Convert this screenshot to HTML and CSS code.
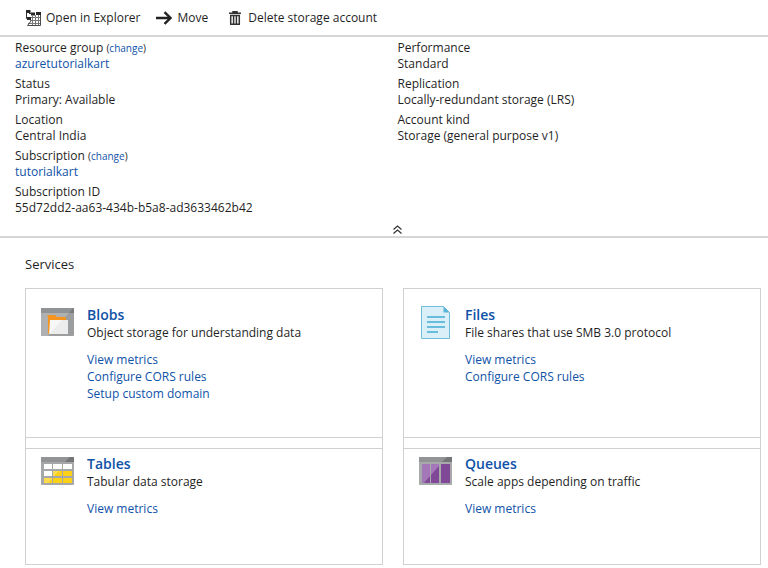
FILE: index.html
```html
<!DOCTYPE html>
<html lang="en">
<head>
<meta charset="utf-8">
<title>Storage account</title>
<meta name="viewport" content="width=device-width, initial-scale=1">
<link rel="stylesheet" href="styles.css">
</head>
<body>
<header class="toolbar">
  <button type="button" class="command">
    <svg width="16" height="16" viewBox="0 0 16 16" aria-hidden="true">
      <path fill="none" stroke="#777" d="M6 7.500h10M5 10.500h11M3 13.500h13M7.500 6v9M10.500 5v10M13.500 4v11"/>
      <path fill="none" stroke="#4a4a4a" d="M15.500 3v12.500H2.500L6 11"/>
      <path fill="#262626" d="M1 0h4.500v3H1zM6 2.500h4v3H6zM11 2h5v3h-5zM2 7h4v3H2z"/>
      <path fill="none" stroke="#333" d="M1.500 2v6.500H3M4 3.500h3"/>
    </svg>
    <span>Open in Explorer</span>
  </button>
  <button type="button" class="command">
    <svg width="16" height="14" viewBox="0 0 16 14" aria-hidden="true">
      <path fill="none" stroke="#222" stroke-width="2.400" d="M0 7h14.500M8.500 1.200 14.500 7l-6 5.800"/>
    </svg>
    <span>Move</span>
  </button>
  <button type="button" class="command command-delete">
    <svg width="12" height="14" viewBox="0 0 12 14" aria-hidden="true">
      <path fill="none" stroke="#333" stroke-width="1.500" d="M0 2.300h12M4 2V.7h4V2M1.700 4v9.200h8.600V4M1 4.500h10M4.600 5v8M7.400 5v8"/>
    </svg>
    <span>Delete storage account</span>
  </button>
</header>

<main>
  <section class="essentials" aria-label="Essentials">
    <div class="essentials-columns">
      <dl class="properties">
        <div class="property"><dt>Resource group <small>(<a href="#">change</a>)</small></dt><dd><a href="#">azuretutorialkart</a></dd></div>
        <div class="property"><dt>Status</dt><dd>Primary: Available</dd></div>
        <div class="property"><dt>Location</dt><dd>Central India</dd></div>
        <div class="property"><dt>Subscription <small>(<a href="#">change</a>)</small></dt><dd><a href="#">tutorialkart</a></dd></div>
        <div class="property"><dt>Subscription ID</dt><dd>55d72dd2-aa63-434b-b5a8-ad3633462b42</dd></div>
      </dl>
      <dl class="properties">
        <div class="property"><dt>Performance</dt><dd>Standard</dd></div>
        <div class="property"><dt>Replication</dt><dd>Locally-redundant storage (LRS)</dd></div>
        <div class="property"><dt>Account kind</dt><dd>Storage (general purpose v1)</dd></div>
      </dl>
    </div>
    <button type="button" class="collapse" aria-label="Collapse essentials">
      <svg width="9" height="9" viewBox="0 0 9 9" aria-hidden="true">
        <path fill="none" stroke="#333" stroke-width="1.200" d="M.5 4.500l4-3.500 4 3.500M.5 8.500l4-3.500 4 3.500"/>
      </svg>
    </button>
  </section>

  <section class="services">
    <h2>Services</h2>
    <div class="service-columns">
      <div class="service-column">
        <article class="service service-tall">
          <svg class="service-icon" width="33" height="28" viewBox="0 0 33 28" aria-hidden="true">
            <rect width="33" height="28" rx="1" fill="#9b9d9e"/>
            <path fill="#aeb0b2" d="M0 5h28L7 28H0z"/>
            <path fill="#7b7c7d" d="M0 1q0-1 1-1h31q1 0 1 1v4H0z"/>
            <path fill="#929394" d="M0 1q0-1 1-1h31L28 5H0z"/>
            <path fill="#f7941d" d="M7 7h7l2 2h9v3H9v14H7V9L6 8z"/>
            <path fill="#ececec" d="M9 12h18v14H8z"/>
            <path fill="#f7f7f7" d="M9 12h12L9 25z"/>
          </svg>
          <div>
            <h3><a href="#">Blobs</a></h3>
            <p>Object storage for understanding data</p>
            <ul><li><a href="#">View metrics</a></li><li><a href="#">Configure CORS rules</a></li><li><a href="#">Setup custom domain</a></li></ul>
          </div>
        </article>
        <article class="service">
          <svg class="service-icon" width="33" height="28" viewBox="0 0 33 28" aria-hidden="true">
            <rect width="33" height="28" rx="1" fill="#a5a7a8"/>
            <path fill="#929394" d="M0 1q0-1 1-1h31q1 0 1 1v4H0z"/>
            <path fill="#747576" d="M24 5l5-5h3q1 0 1 1v4z"/>
            <path fill="#fff" d="M3 7h8v5H3zM12 7h9v5h-9zM22 7h9v5h-9zM3 14h8v5H3z"/>
            <path fill="#fcd116" d="M12 14h9v5h-9zM22 14h9v5h-9zM3 21h8v5H3zM12 21h9v5h-9zM22 21h9v5h-9z"/>
            <path fill="#fff" fill-opacity=".25" d="M3 21h8v1l-4 4H3zM12 14h6l-5 5h-1z"/>
          </svg>
          <div>
            <h3><a href="#">Tables</a></h3>
            <p>Tabular data storage</p>
            <ul><li><a href="#">View metrics</a></li></ul>
          </div>
        </article>
      </div>
      <div class="service-column">
        <article class="service service-tall">
          <svg class="service-icon file-icon" width="33" height="33" viewBox="0 0 33 33" aria-hidden="true">
            <path fill="#daeff8" stroke="#6ebddb" d="M2.500.5h22l6 6v26h-28z"/>
            <path fill="#59b4d9" d="M24.500.500l6 6h-6z"/>
            <path fill="none" stroke="#68bddd" stroke-width="2" d="M8 11h18M8 16h18M8 21h18M8 26h11"/>
          </svg>
          <div>
            <h3><a href="#">Files</a></h3>
            <p>File shares that use SMB 3.0 protocol</p>
            <ul><li><a href="#">View metrics</a></li><li><a href="#">Configure CORS rules</a></li></ul>
          </div>
        </article>
        <article class="service">
          <svg class="service-icon" width="33" height="28" viewBox="0 0 33 28" aria-hidden="true">
            <rect width="33" height="28" rx="1" fill="#a7a9aa"/>
            <path fill="#929394" d="M0 1q0-1 1-1h31q1 0 1 1v4H0z"/>
            <path fill="#747576" d="M23 5l5-5h4q1 0 1 1v4z"/>
            <path fill="#804998" d="M3 7h8v19H3zM12 7h8v19h-8zM22 7h9v19h-9z"/>
            <path fill="#a377b8" d="M3 7h8v12l-6 7H3zM12 7h8v2l-8 9z"/>
          </svg>
          <div>
            <h3><a href="#">Queues</a></h3>
            <p>Scale apps depending on traffic</p>
            <ul><li><a href="#">View metrics</a></li></ul>
          </div>
        </article>
      </div>
    </div>
  </section>
</main>
</body>
</html>
```
FILE: styles.css
```css
* {
  box-sizing: border-box;
}

body {
  margin: 0;
  background: #fff;
  color: #1f1f1f;
  font: 12px/16px "Open Sans", "Noto Sans", sans-serif;
}

h2, h3, p, ul, dl, dd {
  margin: 0;
  padding: 0;
}

ul {
  list-style: none;
}

svg {
  display: block;
  flex: none;
}

button {
  padding: 0;
  border: 0;
  background: none;
  color: inherit;
  font: inherit;
}

a {
  color: #0f52a8;
  text-decoration: none;
}

.toolbar {
  display: flex;
  align-items: center;
  gap: 16px;
  padding: 10px 25px 9px;
  border-bottom: 2px solid #d6d6d6;
}

.command {
  display: flex;
  align-items: center;
  gap: 5px;
}

.command-delete {
  gap: 7px;
  margin-left: 5px;
}

.essentials {
  border-bottom: 2px solid #d6d6d6;
}

.essentials-columns {
  display: grid;
  grid-template-columns: 1fr 1fr;
  gap: 12px;
  padding: 3px 0 0 15px;
}

.properties {
  display: flex;
  flex-direction: column;
  gap: 4px;
}

small {
  font-size: 10px;
}

.collapse {
  display: flex;
  margin: 7px auto 0;
  padding: 2px 0 2px 27px;
}

.services {
  padding: 16px 7px 3px 25px;
}

h2 {
  font-size: 13px;
  font-weight: 400;
  line-height: 20px;
}

.service-columns {
  display: grid;
  grid-template-columns: 1fr 1fr;
  gap: 20px;
  margin-top: 14px;
}

.service-column {
  display: flex;
  flex-direction: column;
  gap: 10px;
  border: 1px solid #d0d0d0;
}

.service {
  display: flex;
  gap: 13px;
  min-height: 116px;
  padding: 7px 15px;
}

.service + .service {
  border-top: 1px solid #d0d0d0;
}

.service-tall {
  min-height: 149px;
  padding-top: 18px;
  border-bottom: 1px solid #d0d0d0;
}

.service-icon {
  margin-top: 1px;
}

.file-icon {
  margin-top: -1px;
}

h3 {
  font-size: 14px;
  font-weight: 600;
  line-height: 16px;
}

p {
  line-height: 20px;
}

ul {
  margin-top: 8px;
  line-height: 17px;
}
```
